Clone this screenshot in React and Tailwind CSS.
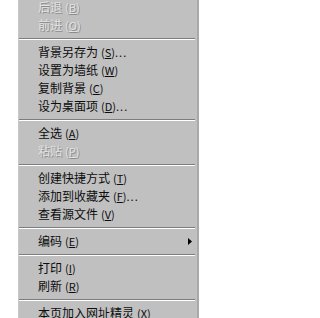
import React from 'react'

const items = [
  { label: "后退", key: "B", disabled: true },
  { label: "前进", key: "O", disabled: true },
  { sep: true },
  { label: "背景另存为", key: "S", dots: true },
  { label: "设置为墙纸", key: "W" },
  { label: "复制背景", key: "C" },
  { label: "设为桌面项", key: "D", dots: true },
  { sep: true },
  { label: "全选", key: "A" },
  { label: "粘贴", key: "P", disabled: true },
  { sep: true },
  { label: "创建快捷方式", key: "T" },
  { label: "添加到收藏夹", key: "F", dots: true },
  { label: "查看源文件", key: "V" },
  { sep: true },
  { label: "编码", key: "E", submenu: true },
  { sep: true },
  { label: "打印", key: "I" },
  { label: "刷新", key: "R" },
  { sep: true },
  { label: "本页加入网址精灵", key: "X" },
];

const MenuItem = ({ item }) => {
  if (item.sep) {
    return (
      <div className="h-[9px] pt-[4px] pr-[2px]">
        <div className="h-[2px] border-t border-t-[#7d7d7d] border-b border-b-white"></div>
      </div>
    );
  }
  const tone = item.disabled
    ? "text-[#e2e2e2] [text-shadow:1px_1px_0_#8c8c8c]"
    : "text-[#0d0d0d]";
  return (
    <div className={`h-[18px] flex items-center pl-[19px] pr-[4px] ${tone}`}>
      <span>{item.label}</span>
      <span className="ml-[3px] text-[11px]">
        (<span className="underline underline-offset-1">{item.key}</span>)
      </span>
      {item.dots && <span className="text-[11px] tracking-[1px]">...</span>}
      {item.submenu && (
        <svg className="ml-auto mr-[1px]" width="4" height="7" viewBox="0 0 4 7">
          <polygon points="0,0 4,3.5 0,7" fill="#000" />
        </svg>
      )}
    </div>
  );
};

const App = () => {
  return (
    <div className="w-[239px] h-[318px] bg-white overflow-hidden">
      <div
        className="ml-[18px] -mt-[2px] w-[181px] bg-[#c0c0c0] border-l border-l-[#c8c8c8] border-r-[2px] border-r-[#a9a9a9] text-[12px] leading-none"
        style={{ fontFamily: '"Noto Sans CJK SC", "DejaVu Sans", sans-serif' }}
      >
        {items.map((item, i) => (
          <MenuItem key={i} item={item} />
        ))}
      </div>
    </div>
  );
};

export default App
